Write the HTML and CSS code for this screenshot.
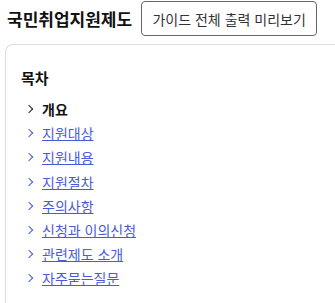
FILE: index.html
```html
<!DOCTYPE html>
<html lang="ko">
<head>
    <meta charset="UTF-8">
    <meta name="viewport" content="width=device-width, initial-scale=1.0">
    <title>국민취업지원제도</title>
    <link rel="stylesheet" href="styles.css">
</head>
<body>
    <div class="page-head">
        <h1>국민취업지원제도</h1>
        <button class="btn-preview">가이드 전체 출력 미리보기</button>
    </div>

    <div class="toc">
        <h2>목차</h2>
        <ul class="toc-list">
            <li class="current"><span class="chev"></span>개요</li>
            <li><span class="chev"></span><a href="#">지원대상</a></li>
            <li><span class="chev"></span><a href="#">지원내용</a></li>
            <li><span class="chev"></span><a href="#">지원절차</a></li>
            <li><span class="chev"></span><a href="#">주의사항</a></li>
            <li><span class="chev"></span><a href="#">신청과 이의신청</a></li>
            <li><span class="chev"></span><a href="#">관련제도 소개</a></li>
            <li><span class="chev"></span><a href="#">자주묻는질문</a></li>
        </ul>
    </div>
</body>
</html>
```

FILE: styles.css
```css
body {
    margin: 0;
    padding: 1px 0 0 5px;
    font-family: "Noto Sans CJK KR", "Noto Sans", sans-serif;
    color: #111;
    background: #fff;
    overflow: hidden;
}

/* Header */
.page-head {
    display: flex;
    align-items: center;
    gap: 9px;
    height: 35px;
}

h1 {
    margin: 0 0 0 2px;
    font-size: 17px;
    font-weight: 700;
    color: #111;
}

.btn-preview {
    height: 35px;
    width: 176px;
    padding: 0;
    font-family: inherit;
    font-size: 14px;
    color: #333;
    background: #fff;
    border: 1px solid #666;
    border-radius: 4px;
}

/* Table of contents - runs off the right edge */
.toc {
    margin-top: 8px;
    padding: 22px 15px 20px;
    border: 1px solid #ddd;
    border-right: none;
    border-radius: 8px 0 0 8px;
}

.toc h2 {
    margin: 0 0 9px;
    font-size: 15px;
    font-weight: 700;
    color: #111;
}

.toc-list {
    list-style: none;
    margin: 0;
    padding: 0 0 0 5px;
}

.toc-list li {
    display: flex;
    align-items: center;
    height: 24.2px;
    font-size: 14px;
}

.toc-list li.current {
    font-weight: 700;
    color: #111;
}

.chev {
    width: 5px;
    height: 5px;
    margin-right: 10px;
    border-top: 1.6px solid #4b5bd8;
    border-right: 1.6px solid #4b5bd8;
    transform: rotate(45deg);
}

.current .chev {
    border-color: #222;
}

.toc-list a {
    color: #4b5bd8;
    text-decoration: underline;
}
```
